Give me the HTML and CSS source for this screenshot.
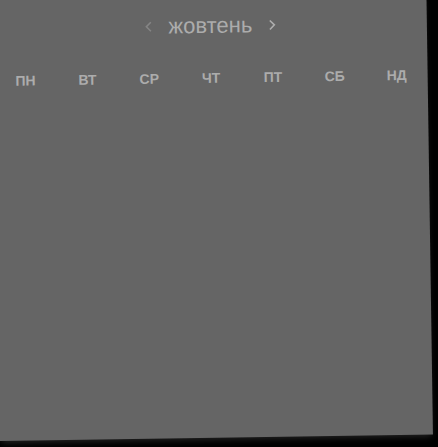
FILE: index.html
```html
<!DOCTYPE html>
<html lang="uk">
<head>
<meta charset="utf-8">
<title>жовтень</title>
<link rel="stylesheet" href="styles.css">
</head>
<body>
<main class="calendar">
  <header class="month">
    <button class="nav nav-prev" type="button" aria-label="Попередній місяць">
      <svg class="chevron" viewBox="0 0 14 14" aria-hidden="true"><path d="M9 2.5 L4.5 7 L9 11.5"/></svg>
    </button>
    <h1 class="month-name">жовтень</h1>
    <button class="nav" type="button" aria-label="Наступний місяць">
      <svg class="chevron" viewBox="0 0 14 14" aria-hidden="true"><path d="M5 2.5 L9.5 7 L5 11.5"/></svg>
    </button>
  </header>
  <table class="days">
    <thead>
      <tr>
        <th scope="col">ПН</th>
        <th scope="col">ВТ</th>
        <th scope="col">СР</th>
        <th scope="col">ЧТ</th>
        <th scope="col">ПТ</th>
        <th scope="col">СБ</th>
        <th scope="col">НД</th>
      </tr>
    </thead>
  </table>
</main>
</body>
</html>
```
FILE: styles.css
```css
* {
  box-sizing: border-box;
}

body {
  margin: 0;
  background: #000;
  font-family: "Liberation Sans", Arial, sans-serif;
  color: #acacac;
  overflow: hidden;
}

.calendar {
  min-height: calc(100vh - 6px);
  margin: 0 5px 6px 0;
  padding-top: 13px;
  background: #656565;
  box-shadow: 0 4px 6px -2px #242424;
  transform: rotate(-0.85deg);
  transform-origin: left bottom;
}

.month {
  display: flex;
  justify-content: center;
  align-items: center;
  gap: 12px;
  height: 32px;
}

.month-name {
  margin: 0;
  font-size: 22px;
  font-weight: 400;
  line-height: 32px;
}

.nav {
  display: flex;
  justify-content: center;
  align-items: center;
  width: 16px;
  height: 32px;
  padding: 0;
  border: 0;
  background: none;
  color: inherit;
}

.nav-prev {
  color: #858585;
}

.chevron {
  width: 14px;
  height: 14px;
  fill: none;
  stroke: currentColor;
  stroke-width: 1.6;
}

.days {
  width: 100%;
  margin-top: 26px;
  border-collapse: collapse;
  table-layout: fixed;
}

.days th {
  padding: 0;
  font-size: 14px;
  font-weight: 700;
  line-height: 20px;
  text-align: center;
}
```
